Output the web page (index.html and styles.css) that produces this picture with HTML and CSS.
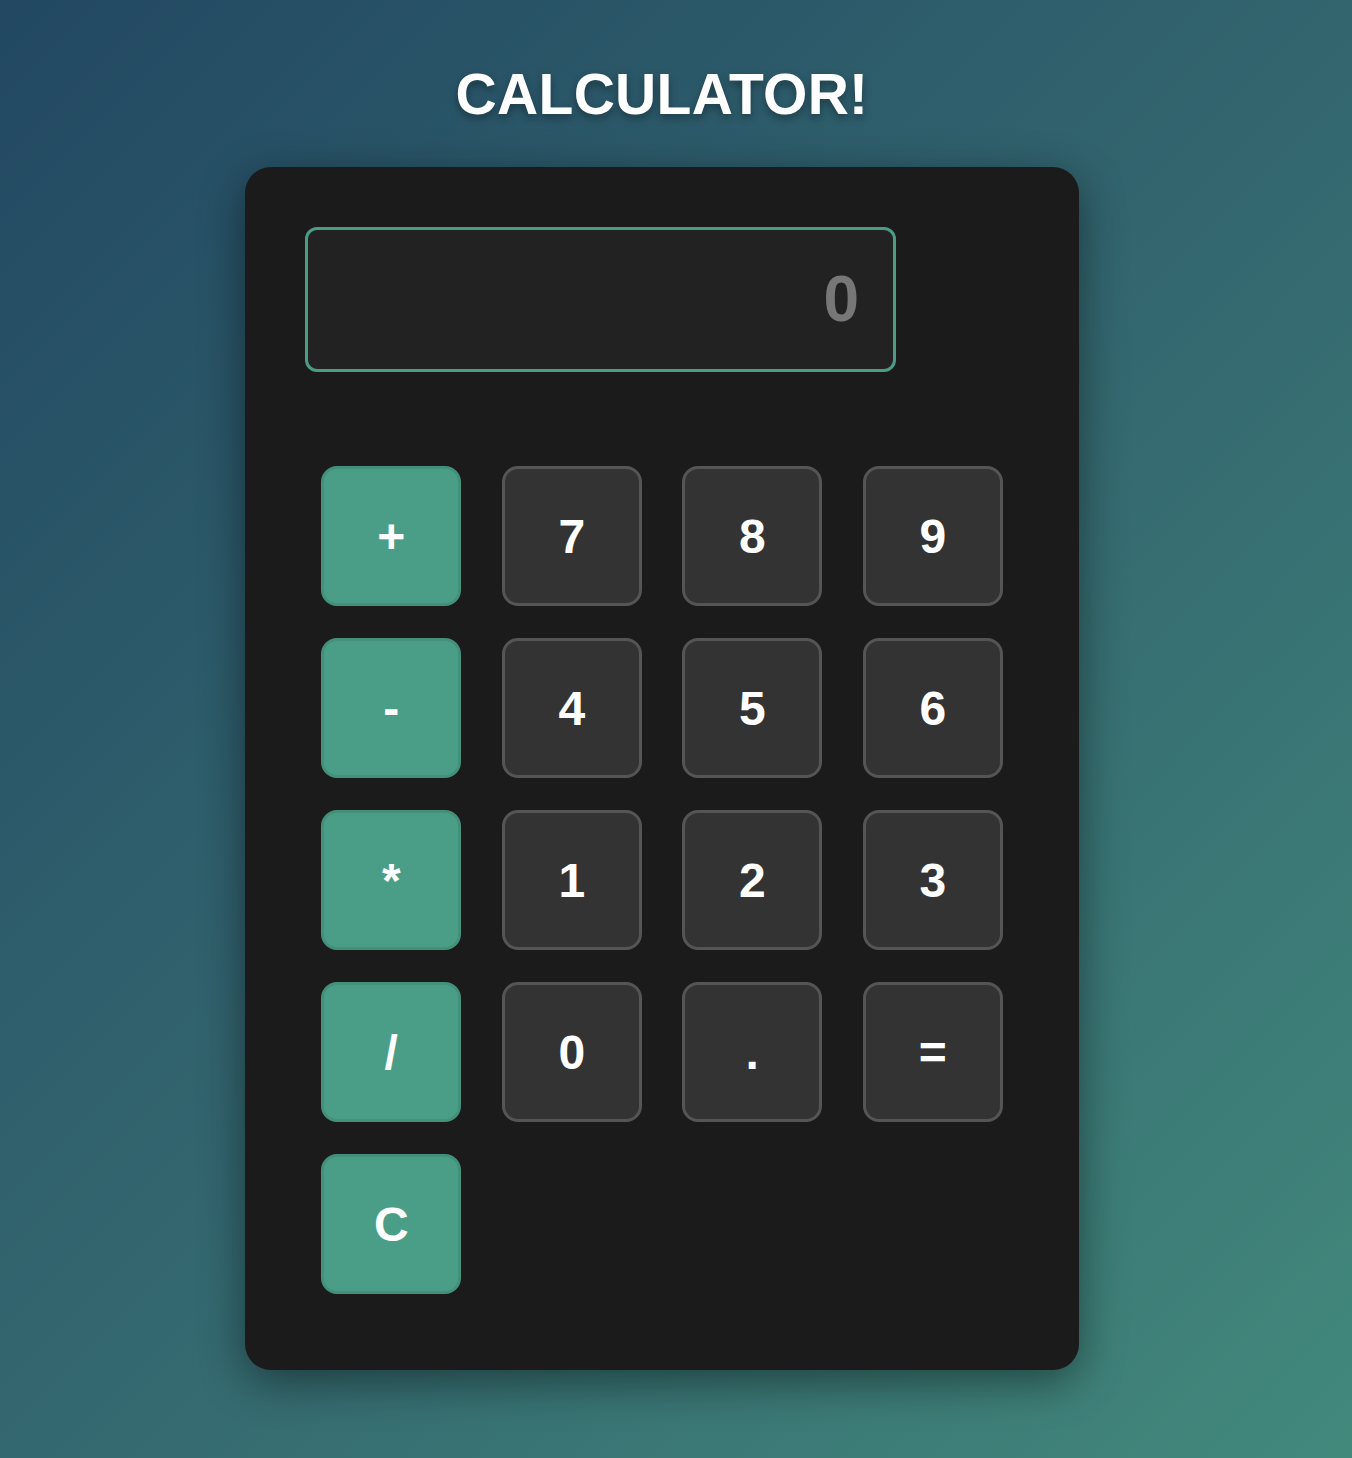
FILE: index.html
```html
<!DOCTYPE html>
<html lang="en">
<head>
  <meta charset="UTF-8" />
  <meta name="viewport" content="width=device-width, initial-scale=1">
  <title>Calculator</title>
  <link rel="stylesheet" href="styles.css">
</head>
<body>

  <h1 class="title">CALCULATOR!</h1>

  <div class="calculator">
    <div class="display" id="display">0</div>
    <div class="buttons">
      <button onclick="appendValue('+')" class="op">+</button>
      <button onclick="appendValue('7')">7</button>
      <button onclick="appendValue('8')">8</button>
      <button onclick="appendValue('9')">9</button>

      <button onclick="appendValue('-')" class="op">-</button>
      <button onclick="appendValue('4')">4</button>
      <button onclick="appendValue('5')">5</button>
      <button onclick="appendValue('6')">6</button>

      <button onclick="appendValue('*')" class="op">*</button>
      <button onclick="appendValue('1')">1</button>
      <button onclick="appendValue('2')">2</button>
      <button onclick="appendValue('3')">3</button>

      <button onclick="appendValue('/')" class="op">/</button>
      <button onclick="appendValue('0')">0</button>
      <button onclick="appendValue('.')">.</button>
      <button onclick="calculate()">=</button>

      <button onclick="clearDisplay()" class="op">C</button>
    </div>
  </div>

  <script>
    const display = document.getElementById("display");

    function appendValue(value) {
      if (display.innerText === "0" || display.innerText === "Error") {
        display.innerText = value;
      } else {
        display.innerText += value;
      }
    }

    function clearDisplay() {
      display.innerText = "0";
    }

    function calculate() {
      try {
        display.innerText = eval(display.innerText);
      } catch (e) {
        display.innerText = "Error";
      }
    }
  </script>

</body>
</html>
```

FILE: styles.css
```css
body {
  margin: 0;
  padding: 62px 28px 88px 0;
  min-height: 100vh;
  box-sizing: border-box;
  background: linear-gradient(135deg, #224862 0%, #33666f 50%, #42897c 100%);
  font-family: 'Liberation Sans', Arial, sans-serif;
  display: flex;
  flex-direction: column;
  align-items: center;
}

.title {
  margin: 0 0 41px;
  font-size: 57px;
  line-height: 64px;
  font-weight: bold;
  letter-spacing: 0.3px;
  color: #fff;
  text-shadow: 0 4px 8px rgba(0, 0, 0, 0.35);
}

.calculator {
  background: #1b1b1b;
  width: 834px;
  box-sizing: border-box;
  padding: 60px 60px 76px;
  border-radius: 26px;
  box-shadow: 0 12px 45px rgba(0, 0, 0, 0.45);
}

.display {
  width: 591px;
  height: 145px;
  box-sizing: border-box;
  background: #222;
  border: 3px solid #4a9d84;
  border-radius: 12px;
  color: #777;
  font-size: 64px;
  font-weight: bold;
  text-align: right;
  line-height: 139px;
  padding-right: 34px;
}

.buttons {
  display: grid;
  grid-template-columns: repeat(4, 140px);
  grid-auto-rows: 140px;
  column-gap: 40.5px;
  row-gap: 32px;
  justify-content: center;
  margin-top: 94px;
}

button {
  font-family: inherit;
  font-size: 48px;
  font-weight: bold;
  color: #fff;
  background: #333;
  border: 3px solid #555;
  border-radius: 16px;
  padding: 0;
  cursor: pointer;
}

button:hover {
  background: #3b3b3b;
}

.op {
  background: #4a9e87;
  border-color: #44917a;
}

.op:hover {
  background: #52aa91;
}
```
